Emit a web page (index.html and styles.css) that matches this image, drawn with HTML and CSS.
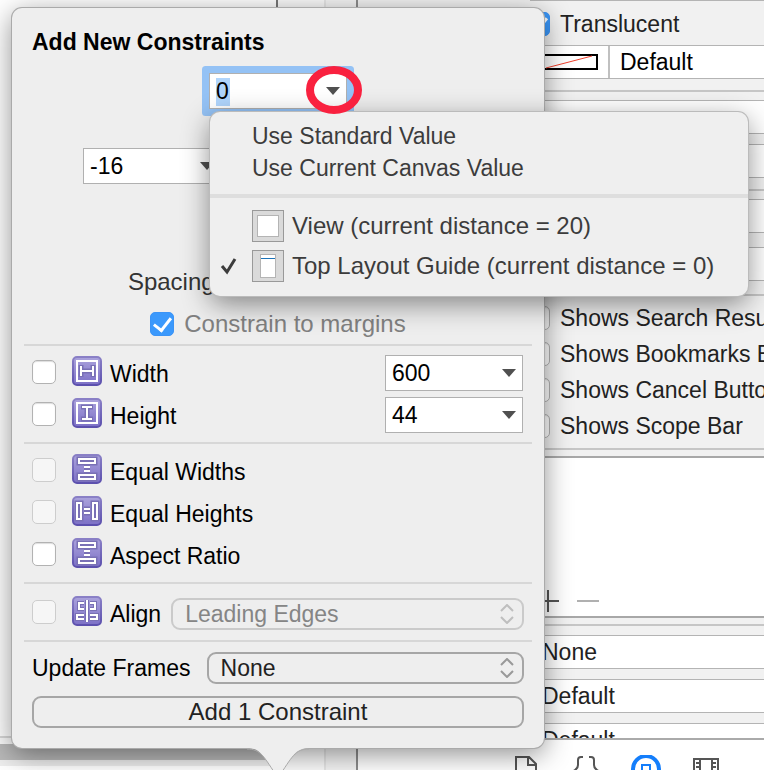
FILE: index.html
```html
<!DOCTYPE html>
<html lang="en">
<head>
<meta charset="utf-8">
<title>Add New Constraints</title>
<link rel="stylesheet" href="styles.css">
</head>
<body>
<svg class="defs" aria-hidden="true">
  <defs>
    <linearGradient id="tile" x1="0" y1="0" x2="0" y2="1">
      <stop offset="0" stop-color="#aba3dc"/><stop offset="1" stop-color="#7c70c6"/>
    </linearGradient>
    <linearGradient id="rim" x1="0" y1="0" x2="0" y2="1">
      <stop offset="0" stop-color="#8a80c6"/><stop offset="1" stop-color="#5c50ae"/>
    </linearGradient>
    <symbol id="base" viewBox="0 0 30 30">
      <rect x="1" y="1" width="28" height="28" rx="4" fill="url(#tile)" stroke="url(#rim)" stroke-width="2"/>
    </symbol>
    <symbol id="i-width" viewBox="0 0 30 30">
      <use href="#base"/>
      <path d="M9 9V21M21 9V21M9 15H21" fill="none" stroke="#7970b5" stroke-width="5"/>
      <path d="M5 5H25V25H5ZM9 10V20M21 10V20M9 15H21" fill="none" stroke="#fff" stroke-width="2"/>
    </symbol>
    <symbol id="i-height" viewBox="0 0 30 30">
      <use href="#base"/>
      <path d="M9 9H21M9 21H21M15 9V21" fill="none" stroke="#7970b5" stroke-width="5"/>
      <path d="M5 5H25V25H5ZM10 9H20M10 21H20M15 9V21" fill="none" stroke="#fff" stroke-width="2"/>
    </symbol>
    <symbol id="i-eqw" viewBox="0 0 30 30">
      <use href="#base"/>
      <path d="M7 5H23V9H7ZM7 21H23V25H7ZM12 13H18M12 17H18" fill="none" stroke="#7970b5" stroke-width="5"/>
      <path d="M7 5H23V9H7ZM7 21H23V25H7ZM12 13H18M12 17H18" fill="none" stroke="#fff" stroke-width="2"/>
    </symbol>
    <symbol id="i-eqh" viewBox="0 0 30 30">
      <use href="#base"/>
      <path d="M5 7H9V23H5ZM21 7H25V23H21ZM12 13H18M12 17H18" fill="none" stroke="#7970b5" stroke-width="5"/>
      <path d="M5 7H9V23H5ZM21 7H25V23H21ZM12 13H18M12 17H18" fill="none" stroke="#fff" stroke-width="2"/>
    </symbol>
    <symbol id="i-align" viewBox="0 0 30 30">
      <use href="#base"/>
      <path d="M12 7H7V13H12M12 19H5V23H12M18 7H23V13H18M18 19H25V23H18M15 4V26" fill="none" stroke="#7970b5" stroke-width="4"/>
      <path d="M12 7H7V13H12M12 19H5V23H12M18 7H23V13H18M18 19H25V23H18M15 4V26" fill="none" stroke="#fff" stroke-width="2"/>
    </symbol>
    <symbol id="i-updown" viewBox="0 0 14 20">
      <path d="M1 7L7 1L13 7M1 13L7 19L13 13" fill="none" stroke="currentColor" stroke-width="2"/>
    </symbol>
  </defs>
</svg>

<div class="window">
  <div class="canvas">
    <div class="canvas-main"></div>
    <div class="canvas-foot"></div>
    <div class="canvas-bar"></div>
    <div class="canvas-end"></div>
  </div>
  <div class="gutter"><div class="gutter-main"></div><div class="gutter-side"></div></div>
  <aside class="inspector">
    <div class="fields">
      <div class="edge"></div>
      <label class="opt first"><input type="checkbox" class="check" checked>Translucent</label>
      <div class="swatch-row">
        <svg class="swatch" viewBox="0 0 80 16" aria-hidden="true"><path d="M1 1H79V15H1Z" fill="#fff" stroke="#000" stroke-width="2"/><path d="M28 14L74 2" stroke="#f0402c"/></svg>
        <span class="swatch-name">Default</span>
      </div>
      <hr class="rule">
      <div class="group">
        <input class="line-field" aria-label="Text">
        <input class="line-field" aria-label="Placeholder">
      </div>
      <hr class="rule">
      <div class="group wide">
        <input class="line-field" aria-label="Prompt">
        <input class="line-field" aria-label="Background">
      </div>
      <hr class="rule">
      <div class="opts">
        <label class="opt"><input type="checkbox" class="check">Shows Search Results Button</label>
        <label class="opt"><input type="checkbox" class="check">Shows Bookmarks Button</label>
        <label class="opt"><input type="checkbox" class="check">Shows Cancel Button</label>
        <label class="opt"><input type="checkbox" class="check">Shows Scope Bar</label>
      </div>
      <hr class="rule">
      <div class="scopes">
        <button class="tiny" aria-label="Add"><svg viewBox="0 0 22 22"><path d="M0 11H22M11 0V22" stroke="#555" stroke-width="2"/></svg></button>
        <button class="tiny" aria-label="Remove"><svg viewBox="0 0 22 22"><path d="M0 11H22" stroke="#b0b0b0" stroke-width="2"/></svg></button>
      </div>
      <hr class="rule tight">
      <div class="group">
        <input class="line-field text" value="None" aria-label="Capitalization">
        <input class="line-field text" value="Default" aria-label="Correction">
        <input class="line-field text" value="Default" aria-label="Keyboard">
      </div>
    </div>
    <nav class="library">
      <button class="lib" aria-label="File templates"><svg viewBox="0 0 30 30"><path d="M5 32V2H18L25 9V32M17 2V10H25" fill="none" stroke="#555" stroke-width="2"/></svg></button>
      <button class="lib" aria-label="Code snippets"><svg viewBox="0 0 30 30"><path d="M12 2H10Q7 2 7 5V10Q7 13 4 15Q7 17 7 20V28M18 2H20Q23 2 23 5V10Q23 13 26 15Q23 17 23 20V28" fill="none" stroke="#555" stroke-width="2"/></svg></button>
      <button class="lib" aria-label="Objects"><svg viewBox="0 0 30 30"><circle cx="15" cy="14" r="13" fill="none" stroke="#147efb" stroke-width="4"/><path d="M11 18V10H19V18Z" fill="none" stroke="#147efb" stroke-width="2"/></svg></button>
      <button class="lib" aria-label="Media"><svg viewBox="0 0 30 30"><path d="M3 30V4H27V30M9 4V30M21 4V30M5 8H9M5 12H9M5 16H9M21 8H25M21 12H25M21 16H25" fill="none" stroke="#555" stroke-width="2"/></svg></button>
    </nav>
  </aside>
</div>

<form class="popover">
  <svg class="arrow" viewBox="0 0 62 32" aria-hidden="true"><path d="M0 0C14 0 17 9 31 30C45 9 48 0 62 0Z" fill="#eee"/><path d="M0 1C14 1 17 9 31 30C45 9 48 1 62 1" fill="none" stroke="#aaa"/></svg>
  <h1 class="title">Add New Constraints</h1>
  <div class="pins">
    <div class="pin-row"><span class="combo focused"><input value="0" aria-label="Top spacing"><i class="caret"></i></span></div>
    <div class="pin-row sides">
      <span class="combo"><input value="-16" aria-label="Left spacing"><i class="caret"></i></span>
      <span class="combo"><input aria-label="Right spacing"><i class="caret"></i></span>
    </div>
    <div class="pin-row"><span class="combo"><input aria-label="Bottom spacing"><i class="caret"></i></span></div>
  </div>
  <p class="hint">Spacing to nearest neighbor</p>
  <label class="margins"><input type="checkbox" class="check" checked>Constrain to margins</label>
  <section class="block sizes">
    <div class="row"><input type="checkbox" class="check" id="w"><svg class="icon"><use href="#i-width"/></svg><label for="w">Width</label><span class="combo"><input value="600" aria-label="Width value"><i class="caret"></i></span></div>
    <div class="row"><input type="checkbox" class="check" id="h"><svg class="icon"><use href="#i-height"/></svg><label for="h">Height</label><span class="combo"><input value="44" aria-label="Height value"><i class="caret"></i></span></div>
  </section>
  <section class="block equals">
    <div class="row"><input type="checkbox" class="check" id="ew" disabled><svg class="icon"><use href="#i-eqw"/></svg><label for="ew">Equal Widths</label></div>
    <div class="row"><input type="checkbox" class="check" id="eh" disabled><svg class="icon"><use href="#i-eqh"/></svg><label for="eh">Equal Heights</label></div>
    <div class="row"><input type="checkbox" class="check" id="ar"><svg class="icon"><use href="#i-eqw"/></svg><label for="ar">Aspect Ratio</label></div>
  </section>
  <section class="block align">
    <div class="row"><input type="checkbox" class="check" id="al" disabled><svg class="icon"><use href="#i-align"/></svg><label for="al">Align</label>
      <span class="popup off"><select aria-label="Alignment" disabled><option>Leading Edges</option></select><svg class="updown"><use href="#i-updown"/></svg></span></div>
  </section>
  <section class="block update">
    <div class="row"><label for="uf">Update Frames</label>
      <span class="popup"><select id="uf"><option>None</option></select><svg class="updown"><use href="#i-updown"/></svg></span></div>
    <button type="button" class="add">Add 1 Constraint</button>
  </section>
</form>

<div class="menu" role="menu">
  <button class="item" role="menuitem">Use Standard Value</button>
  <button class="item" role="menuitem">Use Current Canvas Value</button>
  <hr class="menu-rule">
  <button class="item tall" role="menuitemradio"><span class="tick"></span><svg class="thumb" viewBox="0 0 32 32"><rect width="32" height="32" fill="#999"/><rect x="1" y="1" width="30" height="30" fill="#dadada"/><rect x="5" y="5" width="22" height="22" fill="#b4b4b4"/><rect x="6" y="6" width="20" height="20" fill="#fff"/></svg>View (current distance = 20)</button>
  <button class="item tall" role="menuitemradio" aria-checked="true"><span class="tick"><svg viewBox="0 0 18 18"><path d="M2 9L7 15L15 2" fill="none" stroke="#3c3c3c" stroke-width="3"/></svg></span><svg class="thumb" viewBox="0 0 32 32"><rect width="32" height="32" fill="#999"/><rect x="1" y="1" width="30" height="30" fill="#dadada"/><rect x="8" y="4" width="16" height="24" fill="#b4b4b4"/><rect x="9" y="5" width="14" height="22" fill="#fff"/><rect x="9" y="8" width="14" height="1" fill="#1a72b8"/></svg>Top Layout Guide (current distance = 0)</button>
</div>

<svg class="ring" viewBox="0 0 56 48" aria-hidden="true"><ellipse cx="28" cy="24" rx="24" ry="20" fill="none" stroke="#f9213f" stroke-width="8"/></svg>
</body>
</html>
```

FILE: styles.css
```css
* { box-sizing: border-box; }

body {
  margin: 0;
  min-height: 100vh;
  overflow: hidden;
  position: relative;
  font: 23px/28px "Liberation Sans", Arial, sans-serif;
  color: #000;
}

input, select, button { font: inherit; color: inherit; }
button { padding: 0; border: 0; background: none; text-align: left; }
hr { margin: 0; border: 0; }
.defs { position: absolute; width: 0; height: 0; }

/* Editor window behind the popover */
.window { display: flex; height: 100vh; overflow: hidden; }
.canvas { width: 278px; display: flex; flex-direction: column; background: #fff; }
.canvas-main { flex: 1; border-right: 2px solid #777; }
.canvas-foot { height: 8px; border-top: 2px solid #d8d8d8; background: #fafafa; }
.canvas-bar { height: 16px; background: #b9b9b9; }
.canvas-end { height: 10px; border-bottom: 4px solid #fff; background: #eee; }
.gutter { width: 80px; display: flex; background: #fafafa; border-right: 2px solid #8c8c8c; }
.gutter-main { flex: 1; border-right: 2px solid #e6e6e6; }
.gutter-side { width: 30px; background: #f4f4f4; }

.inspector { flex: 1; min-width: 0; display: flex; flex-direction: column; background: #f1f1f1; color: #222; }
.fields { flex: 1; min-height: 0; overflow: hidden; }
.edge { height: 1px; margin-left: 172px; background: #b4b4b4; }
.opt { display: flex; align-items: center; gap: 10px; height: 36px; padding-left: 168px; white-space: nowrap; }
.opt.first { margin: 5px 0 3px; }
.swatch-row { display: flex; align-items: center; height: 34px; margin-left: 160px; border: solid #b4b4b4; border-width: 1px 0; background: #fff; color: #000; }
.swatch { width: 80px; height: 16px; margin-right: 10px; }
.swatch-name { align-self: stretch; line-height: 32px; padding-left: 10px; border-left: 2px solid #c0c0c0; }
.rule { height: 2px; margin: 11px 0 8px; background: #c6c6c6; }
.group { display: grid; gap: 10px; }
.wide { gap: 14px; }
.line-field { width: 100%; height: 34px; padding: 0 0 0 184px; border: solid #b4b4b4; border-width: 1px 0; border-radius: 0; background: #fff; }
.wide + .rule { margin-top: 13px; }
.opts { margin-top: -4px; }
.opts + .rule { margin: 4px 0 6px; }
.scopes { display: flex; align-items: flex-end; gap: 18px; height: 162px; padding: 0 0 4px 179px; border: solid #a8a8a8; border-width: 2px 0; background: #fff; }
.tiny { width: 22px; height: 22px; }
.tiny svg, .lib svg { display: block; }
.rule.tight { margin: 6px 0 9px; }
.library { display: flex; justify-content: flex-end; height: 32px; padding: 15px 28px 0 0; overflow: hidden; border-top: 2px solid #aaa; background: #fff; }
.lib { width: 60px; height: 30px; padding: 0 15px; }
.lib svg { width: 30px; height: 30px; }

/* Check boxes */
.check { appearance: none; flex: none; width: 24px; height: 24px; margin: 0; border: 1px solid #b2b2b2; border-radius: 5px; background: #fff; box-shadow: inset 0 1px 1px #ddd; }
.check:disabled { border-color: #cdcdcd; background: #f6f6f6; box-shadow: none; }
.check:checked { display: grid; place-items: center; border-color: #3b94f7; background: #3b99fc; box-shadow: none; }
.check:checked::before { content: ""; width: 8px; height: 14px; margin-bottom: 4px; border: solid #fff; border-width: 0 3px 3px 0; transform: rotate(38deg); }

/* Constraint popover */
.popover { position: absolute; left: 12px; top: 8px; width: 532px; padding: 20px 12px; border-radius: 10px; background: #eee; box-shadow: 0 0 0 1px #aaa, 0 6px 28px rgba(0, 0, 0, .45); }
.arrow { position: absolute; left: 235px; top: 100%; width: 62px; height: 32px; }
.title { margin: 0 8px 17px; font-size: 23px; line-height: 28px; font-weight: bold; }
.pins { display: grid; gap: 39px; }
.pin-row { display: flex; justify-content: center; }
.sides { gap: 114px; }
.combo { position: relative; display: block; width: 138px; height: 36px; }
.combo input { display: block; width: 100%; height: 100%; padding: 0 30px 0 6px; border: 1px solid #b0b0b0; border-radius: 0; background: #fff; }
.focused { box-shadow: 0 0 0 7px #94c2f5; border-radius: 1px; }
.focused input { background: linear-gradient(#b0d5fc, #b0d5fc) 6px 4px / 14px 28px no-repeat #fff; }
.caret { position: absolute; right: 7px; top: 14px; border: solid transparent; border-width: 8px 7px 0; border-top-color: #505050; }
.hint { margin: 9px 0 14px; text-align: center; color: #333; }
.margins { display: flex; justify-content: center; align-items: center; gap: 10px; margin-bottom: 6px; color: #808080; }
.hint, .margins, .add, .tall { font-size: 24px; }
.block { border-top: 2px solid #d7d7d7; padding: 0 8px; }
.sizes { padding-top: 7px; padding-bottom: 5px; }
.equals { padding-top: 7px; padding-bottom: 5px; }
.align { padding-top: 14px; padding-bottom: 10px; }
.update { padding-top: 10px; }
.row { display: flex; align-items: center; height: 42px; }
.row .check { margin-bottom: 4px; }
.row .combo { margin: 0 1px 2px auto; }
.icon { width: 30px; height: 30px; margin: 0 8px 6px 16px; }
.align .row, .update .row { height: 32px; }
.popup { position: relative; flex: 1; height: 32px; margin-left: 16px; }
.popup.off { margin-left: 10px; }
.popup select { appearance: none; width: 100%; height: 100%; padding: 0 36px 0 12px; border: 2px solid #a6a6a6; border-radius: 9px; background: #eee; color: #222; opacity: 1; }
.popup.off select { border-color: #cacaca; color: #858585; }
.updown { position: absolute; right: 10px; top: 6px; width: 14px; height: 20px; color: #999; pointer-events: none; }
.off .updown { color: #bebebe; }
.add { display: block; width: 100%; height: 32px; margin-top: 12px; border: 2px solid #a6a6a6; border-radius: 9px; text-align: center; color: #222; }

/* Value menu */
.menu { position: absolute; left: 210px; top: 112px; width: 538px; padding: 8px 0 10px; border-radius: 10px; background: #efefef; color: #3c3c3c; box-shadow: 0 0 0 1px #bbb, 0 8px 28px rgba(0, 0, 0, .45); }
.item { display: flex; align-items: center; width: 100%; height: 32px; padding-left: 42px; white-space: nowrap; }
.menu-rule { height: 4px; margin: 10px 0 8px; background: #dedede; }
.tall { height: 40px; padding-left: 10px; }
.tick { width: 32px; height: 18px; }
.tick svg { display: block; width: 18px; height: 18px; }
.thumb { width: 32px; height: 32px; margin-right: 8px; }

.ring { position: absolute; left: 306px; top: 66px; width: 56px; height: 48px; }
```
